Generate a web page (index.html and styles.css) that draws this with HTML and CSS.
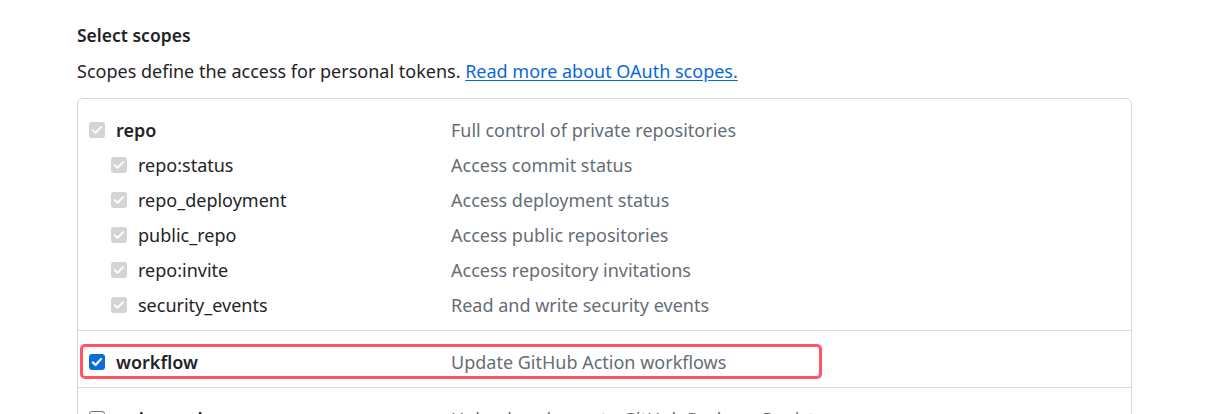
FILE: index.html
```html
<!DOCTYPE html>
<html>
<head>
<meta charset="utf-8">
<link rel="stylesheet" href="styles.css">
</head>
<body>
<div class="page">
  <h3 class="title">Select scopes</h3>
  <p class="lead">Scopes define the access for personal tokens. <a href="#" class="link">Read more about OAuth scopes.</a></p>
  <div class="scopes">
    <div class="group">
      <div class="row">
        <div class="label main"><span class="cb cb-dis"><svg viewBox="0 0 16 16"><path d="M3.8 8.3l2.7 2.6 5.6-5.8" /></svg></span><b>repo</b></div>
        <div class="desc">Full control of private repositories</div>
      </div>
      <div class="row">
        <div class="label sub"><span class="cb cb-dis"><svg viewBox="0 0 16 16"><path d="M3.8 8.3l2.7 2.6 5.6-5.8" /></svg></span>repo:status</div>
        <div class="desc">Access commit status</div>
      </div>
      <div class="row">
        <div class="label sub"><span class="cb cb-dis"><svg viewBox="0 0 16 16"><path d="M3.8 8.3l2.7 2.6 5.6-5.8" /></svg></span>repo_deployment</div>
        <div class="desc">Access deployment status</div>
      </div>
      <div class="row">
        <div class="label sub"><span class="cb cb-dis"><svg viewBox="0 0 16 16"><path d="M3.8 8.3l2.7 2.6 5.6-5.8" /></svg></span>public_repo</div>
        <div class="desc">Access public repositories</div>
      </div>
      <div class="row">
        <div class="label sub"><span class="cb cb-dis"><svg viewBox="0 0 16 16"><path d="M3.8 8.3l2.7 2.6 5.6-5.8" /></svg></span>repo:invite</div>
        <div class="desc">Access repository invitations</div>
      </div>
      <div class="row">
        <div class="label sub"><span class="cb cb-dis"><svg viewBox="0 0 16 16"><path d="M3.8 8.3l2.7 2.6 5.6-5.8" /></svg></span>security_events</div>
        <div class="desc">Read and write security events</div>
      </div>
    </div>
    <div class="group">
      <div class="row highlighted">
        <div class="label main"><span class="cb cb-on"><svg viewBox="0 0 16 16"><path d="M3.8 8.3l2.7 2.6 5.6-5.8" /></svg></span><b>workflow</b></div>
        <div class="desc">Update GitHub Action workflows</div>
        <div class="mark"></div>
      </div>
    </div>
    <div class="group">
      <div class="row">
        <div class="label main"><span class="cb cb-off"></span><b>write:packages</b></div>
        <div class="desc">Upload packages to GitHub Package Registry</div>
      </div>
    </div>
  </div>
</div>
</body>
</html>
```

FILE: styles.css
```css
html, body {
  margin: 0;
  padding: 0;
  background: #ffffff;
}
body {
  font-family: "Noto Sans", "Open Sans", "Liberation Sans", sans-serif;
  color: #1f2328;
  font-size: 18px;
  overflow: hidden;
  height: 414px;
}
.page {
  padding: 0 0 0 77px;
  width: 1055px;
}
.title {
  margin: 0;
  padding-top: 22px;
  font-size: 17.5px;
  font-weight: 600;
  line-height: 26px;
}
.lead {
  margin: 10px 0 0 0;
  line-height: 26px;
  color: #1f2328;
}
.link {
  color: #0969da;
  text-decoration: underline;
  text-underline-offset: 2px;
}
.scopes {
  margin-top: 14px;
  border: 1px solid #d0d7de;
  border-radius: 6px;
}
.group {
  padding: 13px 0 8px 0;
  border-top: 1px solid #d8dee4;
}
.group:first-child {
  border-top: none;
}
.row {
  position: relative;
  display: grid;
  grid-template-columns: 362px 1fr;
  align-items: center;
  height: 35px;
  padding-left: 11px;
}
.label {
  display: flex;
  align-items: center;
  gap: 11px;
}
.label.sub {
  padding-left: 22px;
}
.label b {
  font-weight: 600;
}
.desc {
  color: #656d76;
}
.cb {
  width: 16px;
  height: 16px;
  box-sizing: border-box;
  border-radius: 3px;
  display: inline-flex;
  flex: none;
}
.cb svg {
  width: 16px;
  height: 16px;
  fill: none;
  stroke: #ffffff;
  stroke-width: 2;
  stroke-linecap: round;
  stroke-linejoin: round;
}
.cb-dis {
  background: #d4d4d4;
}
.cb-on {
  background: #0a6cde;
}
.cb-on svg {
  stroke-width: 2.2;
}
.cb-off {
  border: 1.5px solid #767676;
  background: #fff;
}
.mark {
  position: absolute;
  left: 2px;
  top: 0;
  width: 742px;
  height: 35px;
  box-sizing: border-box;
  border: 3px solid #ff5566;
  border-radius: 5px;
  pointer-events: none;
}
```
